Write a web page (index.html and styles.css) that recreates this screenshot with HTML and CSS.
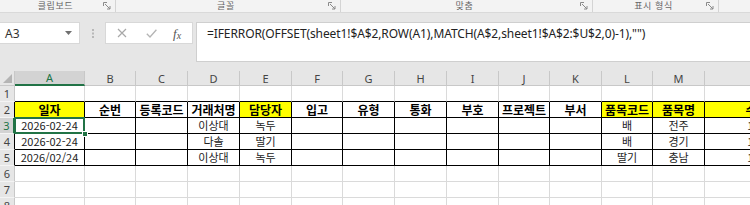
FILE: index.html
```html
<!DOCTYPE html>
<html lang="ko">
<head>
<meta charset="utf-8">
<link rel="stylesheet" href="styles.css">
</head>
<body>
<div class="ribbon">
  <div class="grp g1"><span class="glabel">클립보드</span><svg class="launch" width="8" height="8" viewBox="0 0 8 8"><path d="M0.5 4V0.5H4M2 2L7 7M7 4V7H4" fill="none" stroke="#8a8a8a" stroke-width="1"/></svg></div>
  <div class="grp g2"><span class="glabel">글꼴</span><svg class="launch" width="8" height="8" viewBox="0 0 8 8"><path d="M0.5 4V0.5H4M2 2L7 7M7 4V7H4" fill="none" stroke="#8a8a8a" stroke-width="1"/></svg></div>
  <div class="grp g3"><span class="glabel">맞춤</span><svg class="launch" width="8" height="8" viewBox="0 0 8 8"><path d="M0.5 4V0.5H4M2 2L7 7M7 4V7H4" fill="none" stroke="#8a8a8a" stroke-width="1"/></svg></div>
  <div class="grp g4"><span class="glabel">표시 형식</span><svg class="launch" width="8" height="8" viewBox="0 0 8 8"><path d="M0.5 4V0.5H4M2 2L7 7M7 4V7H4" fill="none" stroke="#8a8a8a" stroke-width="1"/></svg></div>
</div>
<div class="fbar">
  <div class="namebox"><span>A3</span><svg class="dd" width="7" height="4" viewBox="0 0 7 4"><path d="M0 0H7L3.5 4Z" fill="#707070"/></svg></div>
  <div class="dots"><svg width="2" height="9" viewBox="0 0 2 9"><rect x="0" y="0" width="2" height="2" fill="#b8b8b8"/><rect x="0" y="3.5" width="2" height="2" fill="#b8b8b8"/><rect x="0" y="7" width="2" height="2" fill="#b8b8b8"/></svg></div>
  <div class="btns">
    <svg class="ico" width="10" height="10" viewBox="0 0 10 10"><path d="M1 1L9 9M9 1L1 9" stroke="#a8a8a8" stroke-width="1.2" fill="none"/></svg>
    <svg class="ico" width="11" height="9" viewBox="0 0 11 9"><path d="M0.8 4.8L4 8L10.4 0.8" stroke="#b4b4b4" stroke-width="1.3" fill="none"/></svg>
    <span class="fx">f<span class="fxx">x</span></span>
  </div>
  <div class="formula">=IFERROR(OFFSET(sheet1!$A$2,ROW(A1),MATCH(A$2,sheet1!$A$2:$U$2,0)-1),"")</div>
</div>
<div class="sheet">
  <div class="corner"><svg width="9" height="9" viewBox="0 0 9 9"><path d="M9 0V9H0Z" fill="#b4b4b4"/></svg></div>
  <div class="ch sel">A</div><div class="ch">B</div><div class="ch">C</div><div class="ch">D</div><div class="ch">E</div><div class="ch">F</div><div class="ch">G</div><div class="ch">H</div><div class="ch">I</div><div class="ch">J</div><div class="ch">K</div><div class="ch">L</div><div class="ch">M</div><div class="ch">N</div>

  <div class="rh">1</div>
  <div class="c t1"></div><div class="c t1"></div><div class="c t1"></div><div class="c t1"></div><div class="c t1"></div><div class="c t1"></div><div class="c t1"></div><div class="c t1"></div><div class="c t1"></div><div class="c t1"></div><div class="c t1"></div><div class="c t1"></div><div class="c t1"></div><div class="c t1"></div>

  <div class="rh rk">2</div>
  <div class="c k h y">일자</div><div class="c k h">순번</div><div class="c k h">등록코드</div><div class="c k h">거래처명</div><div class="c k h y">담당자</div><div class="c k h">입고</div><div class="c k h">유형</div><div class="c k h">통화</div><div class="c k h">부호</div><div class="c k h">프로젝트</div><div class="c k h">부서</div><div class="c k h y">품목코드</div><div class="c k h y">품목명</div><div class="c k h y">수량</div>

  <div class="rh rsel">3</div>
  <div class="c k active">2026-02-24<span class="handle"></span></div><div class="c k"></div><div class="c k"></div><div class="c k">이상대</div><div class="c k">녹두</div><div class="c k"></div><div class="c k"></div><div class="c k"></div><div class="c k"></div><div class="c k"></div><div class="c k"></div><div class="c k">배</div><div class="c k">전주</div><div class="c k">100</div>

  <div class="rh rk">4</div>
  <div class="c k">2026-02-24</div><div class="c k"></div><div class="c k"></div><div class="c k">다솔</div><div class="c k">딸기</div><div class="c k"></div><div class="c k"></div><div class="c k"></div><div class="c k"></div><div class="c k"></div><div class="c k"></div><div class="c k">배</div><div class="c k">경기</div><div class="c k">100</div>

  <div class="rh rk">5</div>
  <div class="c k">2026/02/24</div><div class="c k"></div><div class="c k"></div><div class="c k">이상대</div><div class="c k">녹두</div><div class="c k"></div><div class="c k"></div><div class="c k"></div><div class="c k"></div><div class="c k"></div><div class="c k"></div><div class="c k">딸기</div><div class="c k">충남</div><div class="c k">100</div>

  <div class="rh">6</div>
  <div class="c"></div><div class="c"></div><div class="c"></div><div class="c"></div><div class="c"></div><div class="c"></div><div class="c"></div><div class="c"></div><div class="c"></div><div class="c"></div><div class="c"></div><div class="c"></div><div class="c"></div><div class="c"></div>

  <div class="rh">7</div>
  <div class="c"></div><div class="c"></div><div class="c"></div><div class="c"></div><div class="c"></div><div class="c"></div><div class="c"></div><div class="c"></div><div class="c"></div><div class="c"></div><div class="c"></div><div class="c"></div><div class="c"></div><div class="c"></div>

  <div class="rh">8</div>
  <div class="c"></div><div class="c"></div><div class="c"></div><div class="c"></div><div class="c"></div><div class="c"></div><div class="c"></div><div class="c"></div><div class="c"></div><div class="c"></div><div class="c"></div><div class="c"></div><div class="c"></div><div class="c"></div>
</div>
</body>
</html>
```
FILE: styles.css
```css
* { box-sizing: border-box; }
html, body { margin: 0; padding: 0; }
body {
  width: 750px;
  height: 205px;
  overflow: hidden;
  background: #fff;
  font-family: "Noto Sans CJK KR", "Noto Sans", sans-serif;
}

/* ribbon group labels */
.ribbon {
  height: 13px;
  display: flex;
  background: #f3f3f3;
  border-bottom: 1px solid #d9d9d9;
  font-size: 9px;
  color: #666;
}
.grp {
  display: flex;
  align-items: center;
  height: 12px;
  border-right: 1px solid #d4d4d4;
  padding-right: 4px;
}
.g1 { width: 116px; }
.g2 { width: 225px; }
.g3 { width: 252px; }
.g4 { width: 126px; }
.glabel {
  flex: 1;
  text-align: center;
  line-height: 12px;
  letter-spacing: 0.6px;
  padding-left: 8px;
}
.launch { flex: none; }

/* formula bar */
.fbar {
  height: 58px;
  display: flex;
  align-items: flex-start;
  padding-top: 9px;
  background: #e6e6e6;
}
.namebox {
  width: 80px;
  height: 22px;
  background: #fff;
  border: 1px solid #d8d8d8;
  border-left: none;
  display: flex;
  align-items: center;
  justify-content: space-between;
  padding: 0 7px 0 5px;
  font-family: "Noto Sans", sans-serif;
  font-size: 12px;
  color: #333;
}
.dots {
  width: 25px;
  height: 22px;
  display: flex;
  align-items: center;
  justify-content: center;
}
.btns {
  width: 88px;
  height: 22px;
  background: #fff;
  border: 1px solid #d8d8d8;
  display: flex;
  align-items: center;
  padding-left: 11px;
}
.btns .ico:nth-child(1) { margin-right: 19px; }
.btns .ico:nth-child(2) { margin-right: 16px; }
.fx {
  font-family: "Liberation Serif", serif;
  font-style: italic;
  font-size: 13px;
  color: #555;
  line-height: 1;
}
.fxx { font-size: 10px; position: relative; top: 1px; }
.formula {
  flex: 1;
  margin-left: 3px;
  height: 40px;
  background: #fff;
  border: 1px solid #cfcfcf;
  border-right: none;
  padding-left: 10px;
  font-family: "Noto Sans", sans-serif;
  font-size: 12px;
  letter-spacing: -0.1px;
  line-height: 22px;
  color: #222;
  white-space: nowrap;
  overflow: hidden;
}

/* sheet grid */
.sheet {
  display: grid;
  grid-template-columns: 15px 70px 51px 52px 52px 52px 51px 52px 52px 52px 51px 52px 51px 52px 104px;
  grid-template-rows: 15px repeat(8, 16px);
  width: 809px;
}
.corner {
  background: #e6e6e6;
  border-right: 1px solid #c8c8c8;
  border-bottom: 1px solid #c8c8c8;
  display: flex;
  align-items: flex-end;
  justify-content: flex-end;
  padding: 0 2px 2px 0;
}
.ch {
  background: #e6e6e6;
  border-right: 1px solid #c8c8c8;
  border-bottom: 1px solid #c8c8c8;
  font-family: "Noto Sans", sans-serif;
  font-size: 11px;
  color: #444;
  display: flex;
  align-items: center;
  justify-content: center;
  line-height: 1;
}
.ch.sel {
  background: #d3d3d3;
  color: #217346;
  border-bottom: 2px solid #217346;
}
.rh {
  background: #e6e6e6;
  border-right: 1px solid #c8c8c8;
  border-bottom: 1px solid #f4f4f4;
  font-family: "Noto Sans", sans-serif;
  font-size: 11px;
  color: #444;
  display: flex;
  align-items: center;
  justify-content: center;
  line-height: 1;
}
.rh.rk { border-right-color: #000; }
.rh.rsel {
  background: #d3d3d3;
  color: #217346;
  border-right: 2px solid #217346;
}
.c {
  border-right: 1px solid #dadada;
  border-bottom: 1px solid #dadada;
  display: flex;
  align-items: center;
  justify-content: center;
  font-size: 11px;
  color: #222;
  white-space: nowrap;
  line-height: 1;
}
.c.t1 { border-bottom-color: #000; }
.c.k { border-right-color: #000; border-bottom-color: #000; }
.c.h { font-weight: bold; font-size: 12px; color: #000; }
.c.y { background: #ffff00; }
.active { position: relative; }
.active::after {
  content: "";
  position: absolute;
  left: -1px;
  top: -1px;
  right: -1px;
  bottom: -1px;
  border: 2px solid #217346;
  pointer-events: none;
}
.handle {
  position: absolute;
  right: -4px;
  bottom: -4px;
  width: 6px;
  height: 6px;
  background: #217346;
  border: 1px solid #fff;
  z-index: 2;
}
```
